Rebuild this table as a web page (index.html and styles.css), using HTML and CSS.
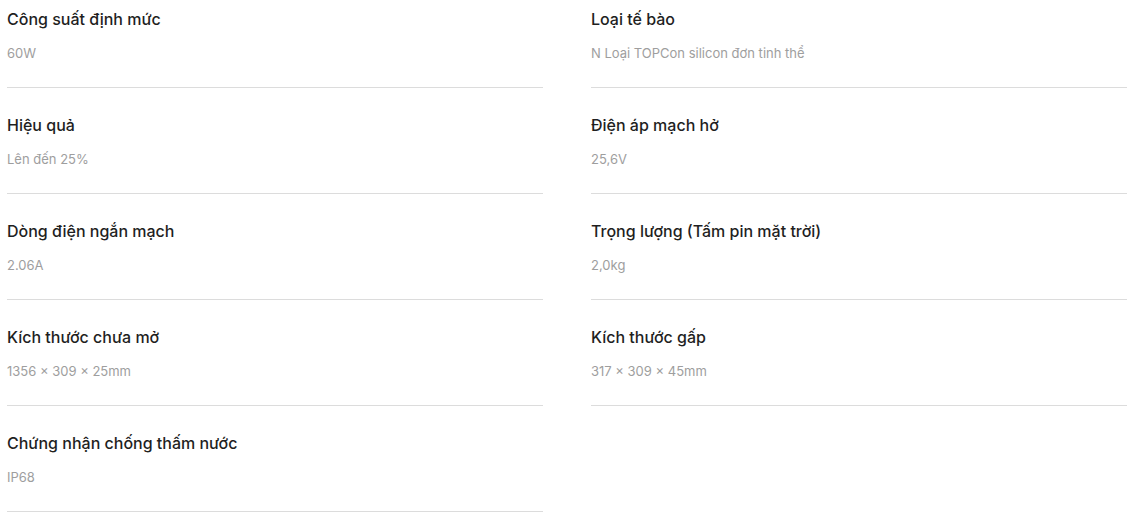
FILE: index.html
```html
<!DOCTYPE html>
<html lang="vi">
<head>
<meta charset="utf-8">
<title>Thông số</title>
<link rel="stylesheet" href="styles.css">
</head>
<body>
<div class="specs">
  <div class="spec"><div class="spec-title">Công suất định mức</div><div class="spec-value">60W</div></div>
  <div class="spec"><div class="spec-title">Loại tế bào</div><div class="spec-value">N Loại TOPCon silicon đơn tinh thể</div></div>
  <div class="spec"><div class="spec-title">Hiệu quả</div><div class="spec-value">Lên đến 25%</div></div>
  <div class="spec"><div class="spec-title">Điện áp mạch hở</div><div class="spec-value">25,6V</div></div>
  <div class="spec"><div class="spec-title">Dòng điện ngắn mạch</div><div class="spec-value">2.06A</div></div>
  <div class="spec"><div class="spec-title">Trọng lượng (Tấm pin mặt trời)</div><div class="spec-value">2,0kg</div></div>
  <div class="spec"><div class="spec-title">Kích thước chưa mở</div><div class="spec-value">1356 × 309 × 25mm</div></div>
  <div class="spec"><div class="spec-title">Kích thước gấp</div><div class="spec-value">317 × 309 × 45mm</div></div>
  <div class="spec"><div class="spec-title">Chứng nhận chống thấm nước</div><div class="spec-value">IP68</div></div>
</div>
</body>
</html>
```
FILE: styles.css
```css
html, body {
  margin: 0;
  padding: 0;
  background: #ffffff;
}
body {
  font-family: Inter, "Noto Sans", sans-serif;
}
.specs {
  display: grid;
  grid-template-columns: 536px 536px;
  column-gap: 48px;
  row-gap: 26px;
  padding: 8px 0 0 7px;
}
.spec {
  border-bottom: 1px solid #dcdcdc;
  padding-bottom: 25px;
}
.spec-title {
  font-size: 16px;
  line-height: 22px;
  font-weight: 500;
  color: #1f1f1f;
}
.spec-value {
  margin-top: 14px;
  font-size: 13px;
  line-height: 18px;
  font-weight: 400;
  color: #9e9e9e;
}
```
